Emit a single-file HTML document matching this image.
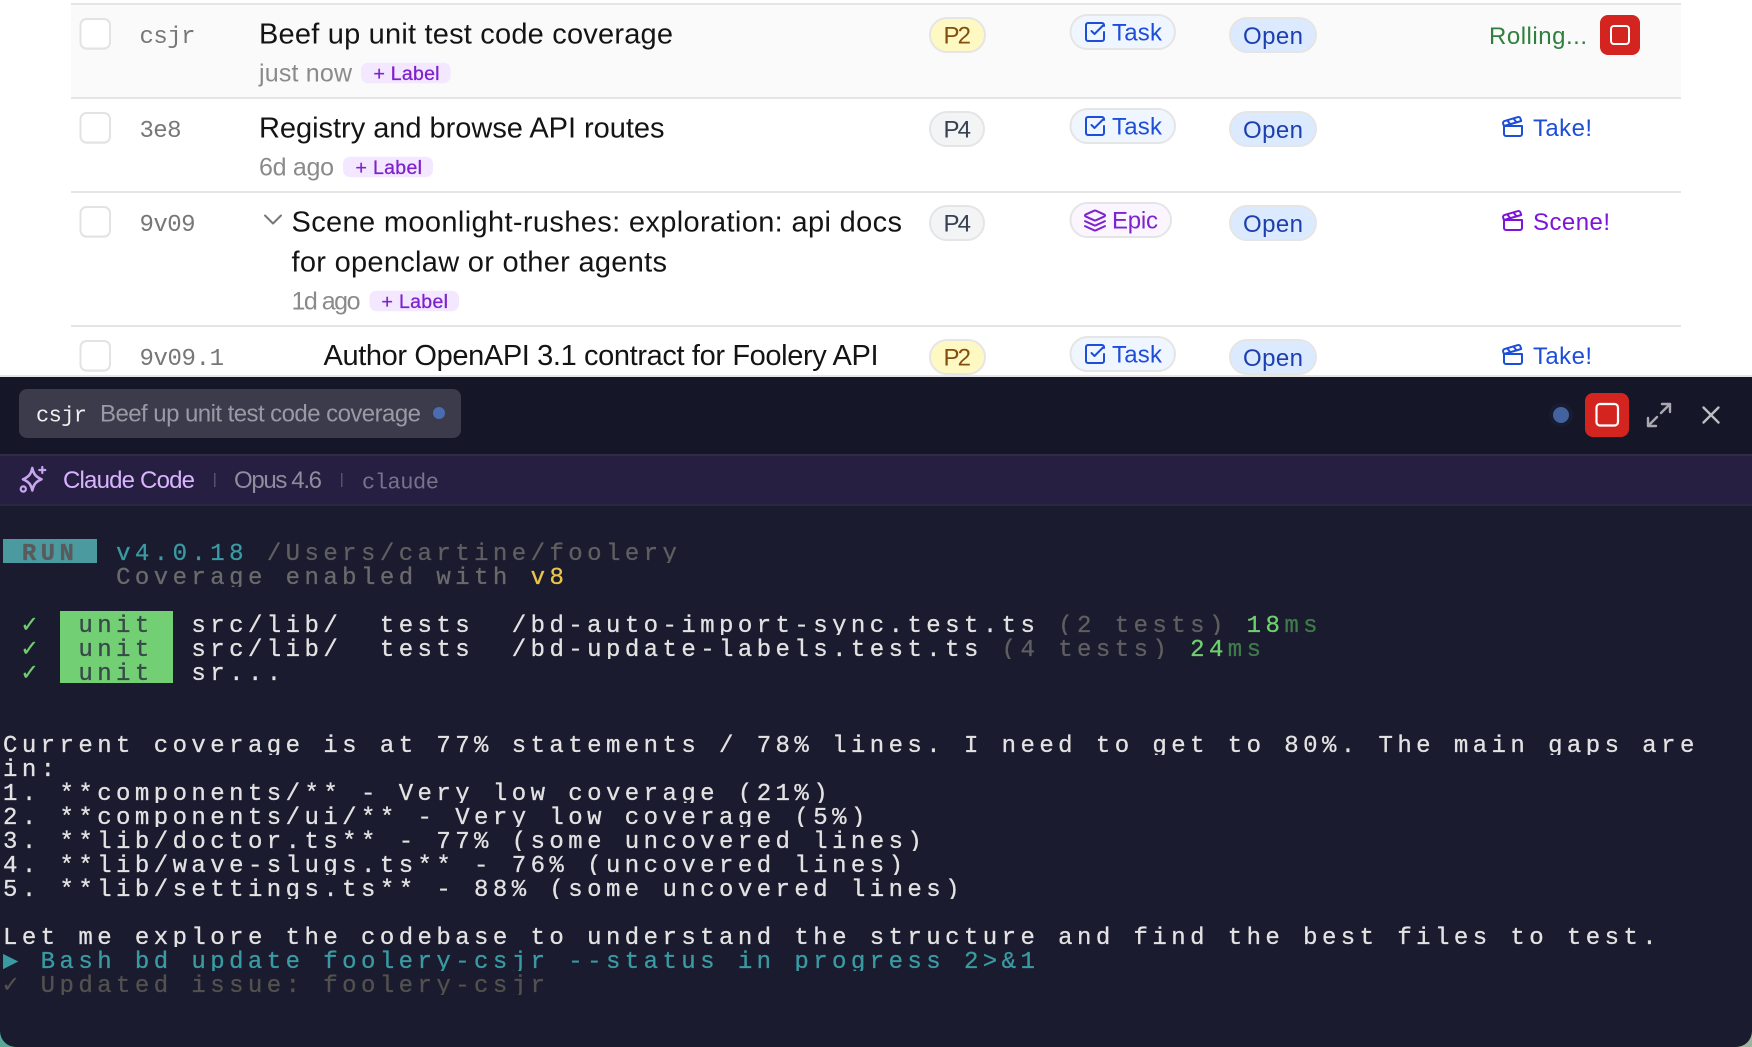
<!DOCTYPE html>
<html lang="en">
<head>
<meta charset="utf-8">
<title>Foolery</title>
<style>
html,body{margin:0;padding:0;background:#fff;width:1752px;height:1047px;overflow:hidden}
#top{position:absolute;left:0;top:0}
#top text{font-family:"Liberation Sans",sans-serif}
#top text.m{font-family:"Liberation Mono",monospace}
#term{position:absolute;left:0;top:506px;width:1752px;height:541px;background:#1a1b2e;overflow:hidden}
.bg{position:absolute}
.r{position:absolute;left:3px;width:1749px;height:24px;overflow:hidden;white-space:pre;
font-family:"Liberation Mono",monospace;font-size:24px;letter-spacing:4.44px;line-height:31.2px;color:#e2e2e2;-webkit-text-stroke:.3px}
.g{display:inline-block;width:18.84px;letter-spacing:0;font-family:"DejaVu Sans Mono",monospace;font-size:25px;line-height:0}
.n{color:transparent}
.t{color:#3a9aa2}.d{color:#5f5e61}.c{color:#6a6a6c}.y{color:#e9c54a}.gr{color:#6fcf6f}.dg{color:#3f7a4a}.u{color:#38484a}
.di{color:#52514f}
</style>
</head>
<body>
<svg id="top" width="1752" height="1047" viewBox="0 0 1752 1047" xmlns="http://www.w3.org/2000/svg">
<defs>
<g id="task" fill="none" stroke="#1d4ed8" stroke-width="2" stroke-linecap="round" stroke-linejoin="round"><path d="M21 12v7a2 2 0 0 1-2 2H5a2 2 0 0 1-2-2V5a2 2 0 0 1 2-2h14a2 2 0 0 1 2 2v1"/><path d="M8.5 11l3 3L20 5.5"/></g>
<g id="film" fill="none" stroke-width="2" stroke-linecap="round" stroke-linejoin="round"><path d="M20.2 6 3 11l-.9-2.4c-.3-1.1.3-2.2 1.3-2.5l13.5-4c1.1-.3 2.2.3 2.5 1.3Z"/><path d="m6.2 5.3 3.1 3.9"/><path d="m12.4 3.4 3.1 4"/><path d="M3 11h18v8a2 2 0 0 1-2 2H5a2 2 0 0 1-2-2Z"/></g>
</defs>
<rect width="1752" height="1047" fill="#fff"/>
<!-- bottom corners -->
<rect x="0" y="1025" width="24" height="22" fill="#58a898"/>
<rect x="1728" y="1025" width="24" height="22" fill="#9db59a"/>
<!-- rows -->
<rect x="71" y="5" width="1610" height="92" fill="#fafafa"/>
<g fill="#e5e5e5"><rect x="71" y="3" width="1610" height="2"/><rect x="71" y="97" width="1610" height="2"/><rect x="71" y="191" width="1610" height="2"/><rect x="71" y="325" width="1610" height="2"/></g>
<!-- checkboxes -->
<g fill="#f0f0f0" opacity=".9">
<rect x="80" y="20" width="30.5" height="30" rx="7"/><rect x="80" y="114" width="30.5" height="30" rx="7"/><rect x="80" y="208" width="30.5" height="30" rx="7"/><rect x="80" y="342" width="30.5" height="30" rx="7"/>
</g>
<g fill="#fff" stroke="#e3e3e3" stroke-width="2">
<rect x="80.5" y="19" width="29.5" height="29.5" rx="6"/><rect x="80.5" y="113" width="29.5" height="29.5" rx="6"/><rect x="80.5" y="207" width="29.5" height="29.5" rx="6"/><rect x="80.5" y="341" width="29.5" height="29.5" rx="6"/>
</g>
<!-- ids -->
<g fill="#777" font-size="24">
<text class="m" x="139.5" y="43" textLength="56">csjr</text>
<text class="m" x="139.5" y="137" textLength="42">3e8</text>
<text class="m" x="139.5" y="231" textLength="56">9v09</text>
<text class="m" x="139.5" y="365" textLength="84.5">9v09.1</text>
</g>
<!-- titles -->
<g fill="#141414" font-size="29">
<text x="259" y="43.3" textLength="414">Beef up unit test code coverage</text>
<text x="259" y="137.3" textLength="405.5">Registry and browse API routes</text>
<text x="291.5" y="231.4" textLength="610.5">Scene moonlight-rushes: exploration: api docs</text>
<text x="291.5" y="271.4" textLength="375.5">for openclaw or other agents</text>
<text x="323.5" y="365.2" textLength="555">Author OpenAPI 3.1 contract for Foolery API</text>
</g>
<path d="M265 215.5l8 8 8-8" fill="none" stroke="#777" stroke-width="2" stroke-linecap="round" stroke-linejoin="round"/>
<!-- sub lines -->
<g fill="#8a8a8a" font-size="25">
<text x="259" y="81.3" textLength="93">just now</text>
<text x="259" y="175.3" textLength="75">6d ago</text>
<text x="291.5" y="309.3" textLength="69">1d ago</text>
</g>
<g fill="#f3e8ff"><rect x="361" y="62.7" width="89.6" height="20.5" rx="7"/><rect x="343" y="156.7" width="90" height="20.5" rx="7"/><rect x="369.4" y="290.7" width="89.6" height="20.5" rx="7"/></g>
<g fill="#7e22ce" stroke="#7e22ce" stroke-width=".3" font-size="19.5">
<text x="373.5" y="80" textLength="66">+ Label</text>
<text x="355.5" y="174" textLength="66.5">+ Label</text>
<text x="381.5" y="308" textLength="66.5">+ Label</text>
</g>
<!-- priority -->
<g stroke="#e5e5e5" stroke-width="2">
<rect x="930" y="18" width="55" height="34" rx="17" fill="#fef9c3"/>
<rect x="930" y="112" width="54" height="34" rx="17" fill="#f3f4f6"/>
<rect x="930" y="206" width="54" height="34" rx="17" fill="#f3f4f6"/>
<rect x="930" y="340" width="55" height="34" rx="17" fill="#fef9c3"/>
</g>
<g font-size="24">
<text x="943.5" y="43.3" textLength="27.5" fill="#854d0e">P2</text>
<text x="943.5" y="137.3" textLength="27.5" fill="#374151">P4</text>
<text x="943.5" y="231.3" textLength="27.5" fill="#374151">P4</text>
<text x="943.5" y="365.3" textLength="27.5" fill="#854d0e">P2</text>
</g>
<!-- type pills -->
<g stroke="#e5e5e5" stroke-width="2">
<rect x="1070.5" y="15" width="104.5" height="34" rx="17" fill="#eff6ff"/>
<rect x="1070.5" y="109" width="104.5" height="34" rx="17" fill="#eff6ff"/>
<rect x="1070.5" y="203" width="100.5" height="34" rx="17" fill="#faf5ff"/>
<rect x="1070.5" y="337" width="104.5" height="34" rx="17" fill="#eff6ff"/>
</g>
<use href="#task" transform="translate(1083 20)"/>
<use href="#task" transform="translate(1083 114)"/>
<use href="#task" transform="translate(1083 342)"/>
<g transform="translate(1083 208.5)" fill="none" stroke="#7e22ce" stroke-width="2" stroke-linecap="round" stroke-linejoin="round"><path d="m12.83 2.18a2 2 0 0 0-1.66 0L2.6 6.08a1 1 0 0 0 0 1.83l8.58 3.91a2 2 0 0 0 1.66 0l8.58-3.9a1 1 0 0 0 0-1.83Z"/><path d="m22 17.65-9.17 4.16a2 2 0 0 1-1.66 0L2 17.65"/><path d="m22 12.65-9.17 4.16a2 2 0 0 1-1.66 0L2 12.65"/></g>
<g font-size="24">
<text x="1112" y="40.7" textLength="50" fill="#1d4ed8">Task</text>
<text x="1112" y="134.7" textLength="50" fill="#1d4ed8">Task</text>
<text x="1112" y="228.7" textLength="46" fill="#7e22ce">Epic</text>
<text x="1112" y="362.7" textLength="50" fill="#1d4ed8">Task</text>
</g>
<!-- open pills -->
<g stroke="#e5e5e5" stroke-width="2" fill="#dbeafe">
<rect x="1230" y="18" width="86" height="34" rx="17"/>
<rect x="1230" y="112" width="86" height="34" rx="17"/>
<rect x="1230" y="206" width="86" height="34" rx="17"/>
<rect x="1230" y="340" width="86" height="34" rx="17"/>
</g>
<g font-size="24" fill="#1e40af">
<text x="1243" y="44" textLength="60">Open</text>
<text x="1243" y="138" textLength="60">Open</text>
<text x="1243" y="232" textLength="60">Open</text>
<text x="1243" y="366" textLength="60">Open</text>
</g>
<!-- actions -->
<text x="1489" y="44" font-size="24" textLength="98" fill="#2f8040">Rolling...</text>
<rect x="1600" y="15" width="40" height="40" rx="8" fill="#d42420"/>
<rect x="1611" y="26" width="18" height="18" rx="3" fill="none" stroke="#fff" stroke-width="2"/>
<use href="#film" stroke="#1d4ed8" transform="translate(1501 115)"/>
<use href="#film" stroke="#7e14d8" transform="translate(1501 209)"/>
<use href="#film" stroke="#1d4ed8" transform="translate(1501 343)"/>
<g font-size="24">
<text x="1533" y="136" textLength="59" fill="#1d4ed8">Take!</text>
<text x="1533" y="230" textLength="77" fill="#7e14d8">Scene!</text>
<text x="1533" y="364" textLength="59" fill="#1d4ed8">Take!</text>
</g>
<!-- panel header -->
<rect x="0" y="375" width="1752" height="2" fill="#e5e5e5"/>
<rect x="0" y="377" width="1752" height="77" fill="#151628"/>
<rect x="19" y="389" width="442" height="49" rx="8" fill="#3b3b4b"/>
<text class="m" x="36" y="421.7" font-size="22" textLength="51" fill="#f0f0f0">csjr</text>
<text x="100" y="421.7" font-size="24" textLength="321" fill="#9a9aa6">Beef up unit test code coverage</text>
<circle cx="439" cy="413" r="6" fill="#4b6cb0"/>
<circle cx="1561" cy="415" r="12" fill="#3f63a8" opacity=".08"/>
<circle cx="1561" cy="415" r="8" fill="#43639f"/>
<rect x="1585" y="393" width="44" height="44" rx="8" fill="#d42420"/>
<rect x="1596.5" y="404" width="21.5" height="21.5" rx="3.5" fill="none" stroke="#fff" stroke-width="2.2"/>
<g fill="none" stroke="#a8a8b0" stroke-width="2.4" stroke-linecap="round" stroke-linejoin="round">
<path d="M1670 404l-9 9M1648 426l9-9M1662 404h8v8M1656 426h-8v-8"/>
<path d="M1703.5 407.5l15 15M1718.5 407.5l-15 15" stroke="#bdbdc4"/>
</g>
<!-- sub bar -->
<rect x="0" y="454" width="1752" height="52" fill="#271f42"/>
<rect x="0" y="454" width="1752" height="2" fill="#302a45"/>
<rect x="0" y="504" width="1752" height="2" fill="#2a2740"/>
<g fill="none" stroke="#c9a4ee" stroke-width="2.6" stroke-linecap="round" stroke-linejoin="round">
<path d="M32.3 468C33.6 474 35.6 476.8 41.5 479.3C35.6 481.8 33.6 484.6 32.3 490.5C31 484.6 29 481.8 23 479.3C29 476.8 31 474 32.3 468Z"/>
<path d="M42.3 467v6M39.3 470h6" stroke-width="2.2"/>
<circle cx="23.3" cy="489" r="2.6" stroke-width="2.2"/>
</g>
<text x="63" y="488" font-size="24" textLength="132" fill="#d8b4fe">Claude Code</text>
<rect x="214" y="473" width="1.5" height="14" fill="#56506a"/>
<text x="234" y="488" font-size="24" textLength="88" fill="#8f8c9c">Opus 4.6</text>
<rect x="341" y="473" width="1.5" height="14" fill="#56506a"/>
<text class="m" x="362" y="488.7" font-size="22" textLength="77" fill="#77748a">claude</text>
</svg>

<div id="term" style="border-radius:0 0 16px 16px">
<div class="bg" style="left:3px;top:33px;width:94px;height:24px;background:#4a9aa0"></div>
<div class="bg" style="left:60px;top:105px;width:113px;height:72px;background:#73cf73"></div>
<div class="r" style="top:33px"> <b style="color:#5a5a5c">RUN</b>  <span class="t">v4.0.18</span> <span class="d">/Users/cartine/foolery</span></div>
<div class="r" style="top:57px">      <span class="c">Coverage enabled with </span><span class="y">v8</span></div>
<div class="r" style="top:105px"> <span class="g gr">✓</span>  <span class="u">unit</span>  src/lib/<span class="n">__</span>tests<span class="n">__</span>/bd-auto-import-sync.test.ts <span class="d">(2 tests)</span> <span class="gr">18</span><span class="dg">ms</span></div>
<div class="r" style="top:129px"> <span class="g gr">✓</span>  <span class="u">unit</span>  src/lib/<span class="n">__</span>tests<span class="n">__</span>/bd-update-labels.test.ts <span class="d">(4 tests)</span> <span class="gr">24</span><span class="dg">ms</span></div>
<div class="r" style="top:153px"> <span class="g gr">✓</span>  <span class="u">unit</span>  sr...</div>
<div class="r" style="top:225px">Current coverage is at 77% statements / 78% lines. I need to get to 80%. The main gaps are</div>
<div class="r" style="top:249px">in:</div>
<div class="r" style="top:273px">1. **components/** - Very low coverage (21%)</div>
<div class="r" style="top:297px">2. **components/ui/** - Very low coverage (5%)</div>
<div class="r" style="top:321px">3. **lib/doctor.ts** - 77% (some uncovered lines)</div>
<div class="r" style="top:345px">4. **lib/wave-slugs.ts** - 76% (uncovered lines)</div>
<div class="r" style="top:369px">5. **lib/settings.ts** - 88% (some uncovered lines)</div>
<div class="r" style="top:417px">Let me explore the codebase to understand the structure and find the best files to test.</div>
<div class="r t" style="top:441px"><span class="g">▶</span> Bash bd update foolery-csjr --status in<span class="n">_</span>progress 2&gt;&amp;1</div>
<div class="r di" style="top:465px"><span class="g">✓</span> Updated issue: foolery-csjr</div>
</div>
</body>
</html>
